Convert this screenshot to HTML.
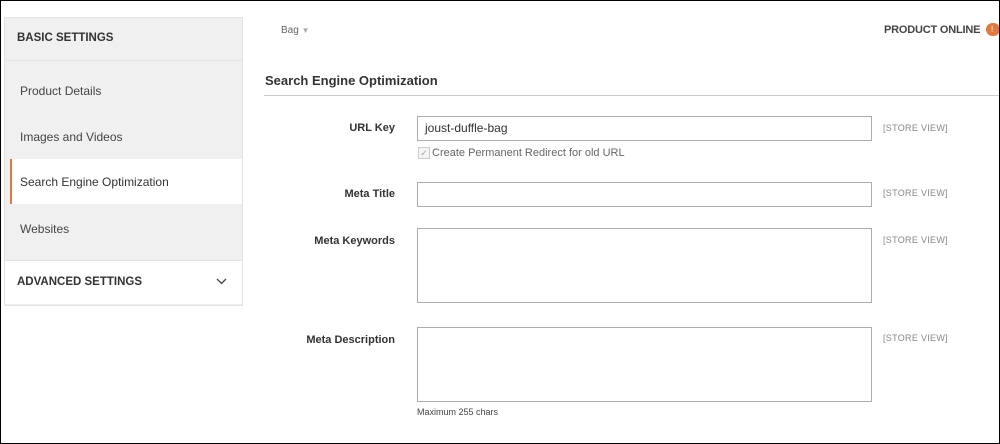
<!DOCTYPE html><html><head><style>
body{margin:0;width:1000px;height:444px;overflow:hidden;font-family:"Liberation Sans",sans-serif;background:#fff;}
.frame{position:absolute;left:0;top:0;width:998px;height:442px;border:1px solid #000;}
.a{position:absolute;}
.side{left:4px;top:17px;width:237px;height:287px;border:1px solid #e3e3e3;background:#f0f0f0;}
.t{font-size:12px;color:#333;}
.lbl{font-size:11px;font-weight:bold;color:#333;text-align:right;width:120px;}
.inp{border:1px solid #adadad;background:#fff;box-sizing:border-box;}
.sv{font-size:9px;color:#888;letter-spacing:.3px;}
</style></head><body>
<div class="a side"></div>
<div class="a" style="left:5px;top:60px;width:237px;height:1px;background:#e3e3e3"></div>
<div class="a t" style="left:17px;top:32px;font-weight:bold;font-size:11.5px">BASIC SETTINGS</div>
<div class="a t" style="left:20px;top:84px;color:#444">Product Details</div>
<div class="a t" style="left:20px;top:130px;color:#444">Images and Videos</div>
<div class="a" style="left:10px;top:159px;width:232px;height:45px;background:#fff;border-left:2px solid #e07a3f;box-sizing:border-box"></div>
<div class="a t" style="left:20px;top:175px;color:#333">Search Engine Optimization</div>
<div class="a t" style="left:20px;top:222px;color:#444">Websites</div>
<div class="a" style="left:5px;top:260px;width:237px;height:44px;background:#fff;border-top:1px solid #e3e3e3;box-sizing:border-box"></div>
<div class="a t" style="left:17px;top:276px;font-weight:bold;font-size:11.5px">ADVANCED SETTINGS</div>
<svg class="a" style="left:216px;top:278px" width="11" height="7"><path d="M1 1l4.5 4.5L10 1" stroke="#444" stroke-width="1.3" fill="none"/></svg>
<div class="a" style="left:281px;top:25px;font-size:10px;color:#666">Bag <span style="font-size:8px;color:#aaa">▼</span></div>
<div class="a" style="left:884px;top:24px;font-size:11px;font-weight:bold;color:#444;letter-spacing:-0.2px">PRODUCT ONLINE</div>
<div class="a" style="left:986px;top:23px;width:14px;height:13px;border-radius:7px;background:#e07a3f;color:#fff;font-size:8px;line-height:13px;text-indent:5px">!</div>
<div class="a" style="left:265px;top:73px;font-size:13px;font-weight:bold;color:#333">Search Engine Optimization</div>
<div class="a" style="left:264px;top:95px;width:735px;height:1px;background:#ccc"></div>
<div class="a lbl" style="left:275px;top:122px">URL Key</div>
<div class="a inp" style="left:417px;top:116px;width:455px;height:25px"></div>
<div class="a" style="left:425px;top:121px;font-size:12px;color:#333">joust-duffle-bag</div>
<div class="a" style="left:418px;top:147px;width:10px;height:10px;border:1px solid #ccc;background:#f4f4f4;font-size:9px;color:#aaa;line-height:10px;text-align:center">✓</div>
<div class="a" style="left:432px;top:147px;font-size:11px;color:#666">Create Permanent Redirect for old URL</div>
<div class="a sv" style="left:883px;top:123px">[STORE VIEW]</div>
<div class="a lbl" style="left:275px;top:188px">Meta Title</div>
<div class="a inp" style="left:417px;top:182px;width:455px;height:25px"></div>
<div class="a sv" style="left:883px;top:188px">[STORE VIEW]</div>
<div class="a lbl" style="left:275px;top:235px">Meta Keywords</div>
<div class="a inp" style="left:417px;top:228px;width:455px;height:75px"></div>
<div class="a sv" style="left:883px;top:235px">[STORE VIEW]</div>
<div class="a lbl" style="left:275px;top:334px">Meta Description</div>
<div class="a inp" style="left:417px;top:327px;width:455px;height:75px"></div>
<div class="a sv" style="left:883px;top:333px">[STORE VIEW]</div>
<div class="a" style="left:417px;top:407px;font-size:9px;color:#444">Maximum 255 chars</div>
<div class="frame"></div>
</body></html>
